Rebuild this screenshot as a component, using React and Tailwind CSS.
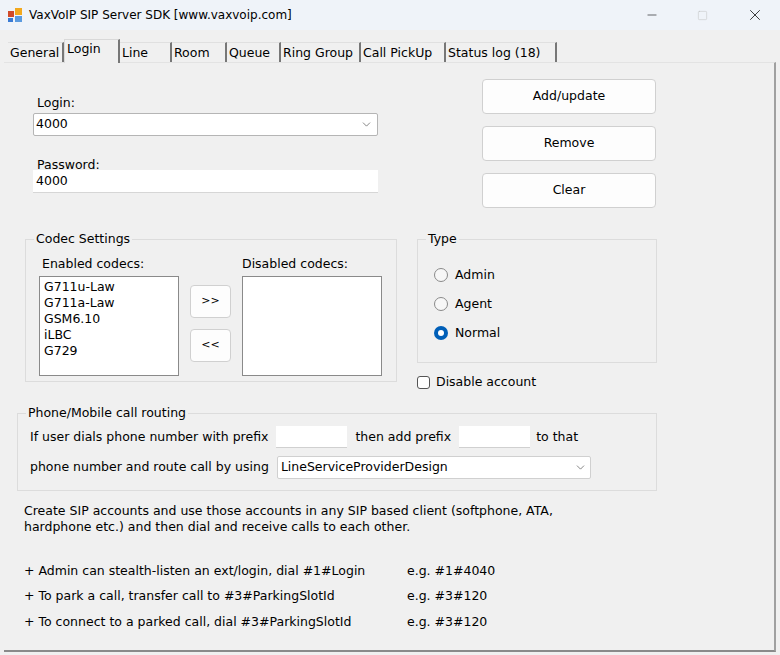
import { ChevronDown, Minus, Square, X } from "lucide-react";

const tabs = [
    { label: "General", w: 56 },
    { label: "Login", w: 56, active: true },
    { label: "Line", w: 52 },
    { label: "Room", w: 55 },
    { label: "Queue", w: 54 },
    { label: "Ring Group", w: 80 },
    { label: "Call PickUp", w: 85 },
    { label: "Status log (18)", w: 111 },
];

function Radio({ label, checked }) {
    return (
        <div className="flex items-center gap-[7px] h-[29px]">
            {checked ? (
                <span className="w-[14px] h-[14px] rounded-full bg-[#005fb8] flex items-center justify-center">
                    <span className="w-[6px] h-[6px] rounded-full bg-white" />
                </span>
            ) : (
                <span className="w-[14px] h-[14px] rounded-full border border-[#8a8a8a] bg-[#f7f7f7]" />
            )}
            <span>{label}</span>
        </div>
    );
}

function Button({ children, className }) {
    return (
        <div className={`bg-[#fdfdfd] border border-[#d0d0d0] rounded-[4px] flex items-center justify-center ${className}`}>
            {children}
        </div>
    );
}

export default function App() {
    return (
        <div className="w-[780px] h-[655px] bg-[#f0f0f0] text-[12.5px] text-black overflow-hidden" style={{ fontFamily: '"DejaVu Sans", Verdana, sans-serif' }}>
            {/* title bar */}
            <div className="h-[30px] bg-[#eff3f9] flex items-center text-[12px]">
                <svg width="16" height="16" viewBox="0 0 16 16" className="ml-[7px]">
                    <rect x="1" y="4" width="6" height="6" fill="#d04a2a" />
                    <rect x="8" y="1" width="7" height="7" fill="#f2a81e" />
                    <rect x="1" y="11" width="5" height="4" fill="#3a7bd5" />
                    <rect x="8" y="9" width="7" height="6" fill="#5b9be0" />
                </svg>
                <span className="ml-[6px]">VaxVoIP SIP Server SDK [www.vaxvoip.com]</span>
                <div className="ml-auto flex items-center">
                    <Minus size={14} strokeWidth={1} className="mr-[38px]" />
                    <Square size={11} strokeWidth={1} className="mr-[38px] text-[#bbb]" />
                    <X size={18} strokeWidth={1} className="mr-[16px]" />
                </div>
            </div>

            {/* tabs */}
            <div className="h-[32px] flex items-end pl-[8px] pt-[10px]">
                {tabs.map((t) => (
                    <div
                        key={t.label}
                        style={{ width: t.w }}
                        className={
                            t.active
                                ? "h-[24px] -mb-px bg-[#f0f0f0] border-x border-t border-[#d9d9d9] border-r-[#777] border-r-2 pl-[2px] z-10 leading-[18px]"
                                : "h-[20px] border-r-2 border-[#777] border-t border-t-[#e0e0e0] pl-[2px] leading-[20px]"
                        }
                    >
                        {t.label}
                    </div>
                ))}
            </div>

            {/* page */}
            <div className="mx-[4px] h-[590px] border-t border-[#e3e3e3] border-r-2 border-r-[#a0a0a0] border-b-2 border-b-[#8a8a8a] relative">
                <div className="flex">
                    {/* left column */}
                    <div className="w-[400px] pl-[17px]">
                        <div className="pl-[12px] pt-[31px]">
                            <div className="pl-[4px] h-[19px]">Login:</div>
                            <div className="w-[345px] h-[23px] bg-white border border-[#b5b5b5] rounded-[2px] flex items-center px-[2px]">
                                4000
                                <ChevronDown size={13} strokeWidth={1.3} className="ml-auto mr-[2px] text-[#555]" />
                            </div>
                            <div className="pl-[4px] h-[19px] mt-[20px]">Password:</div>
                            <div className="w-[345px] h-[23px] bg-white border-b border-[#d6d6d6] flex items-center px-[3px] mt-[-5px]">4000</div>
                        </div>
                        <fieldset className="mt-[37px] ml-[4px] w-[372px] h-[152px] border border-[#dcdcdc] px-[13px]">
                            <legend className="px-[2px] ml-[-5px]">Codec Settings</legend>
                            <div className="flex mt-[6px]">
                                <div>
                                    <div className="pl-[3px]">Enabled codecs:</div>
                                    <div className="w-[140px] h-[100px] mt-[2px] bg-white border border-[#8a8a8a] pl-[4px] pt-[2px] leading-[16px]">
                                        <div>G711u-Law</div>
                                        <div>G711a-Law</div>
                                        <div>GSM6.10</div>
                                        <div>iLBC</div>
                                        <div>G729</div>
                                    </div>
                                </div>
                                <div className="flex flex-col gap-[11px] mx-[11px] pt-[30px] text-[11px]">
                                    <Button className="w-[41px] h-[33px]">&gt;&gt;</Button>
                                    <Button className="w-[41px] h-[33px]">&lt;&lt;</Button>
                                </div>
                                <div>
                                    <div>Disabled codecs:</div>
                                    <div className="w-[140px] h-[100px] mt-[2px] bg-white border border-[#8a8a8a]" />
                                </div>
                            </div>
                        </fieldset>
                    </div>

                    {/* right column */}
                    <div className="pl-[13px]">
                        <div className="flex flex-col gap-[12px] pt-[16px] pl-[65px]">
                            <Button className="w-[174px] h-[35px]">Add/update</Button>
                            <Button className="w-[174px] h-[35px]">Remove</Button>
                            <Button className="w-[174px] h-[35px]">Clear</Button>
                        </div>
                        <fieldset className="mt-[22px] w-[240px] h-[133px] border border-[#dcdcdc] pl-[16px] pt-[12px]">
                            <legend className="px-[2px] ml-[-8px]">Type</legend>
                            <Radio label="Admin" />
                            <Radio label="Agent" />
                            <Radio label="Normal" checked />
                        </fieldset>
                        <div className="flex items-center gap-[6px] mt-[10px]">
                            <span className="w-[13px] h-[13px] border border-[#555] rounded-[3px] bg-white" />
                            Disable account
                        </div>
                    </div>
                </div>

                <fieldset className="ml-[13px] mt-[12px] w-[640px] h-[87px] border border-[#dcdcdc] pl-[12px]">
                    <legend className="px-[2px] ml-[-4px]">Phone/Mobile call routing</legend>
                    <div className="flex items-center h-[23px] mt-[3px]">
                        <span>If user dials phone number with prefix</span>
                        <span className="w-[71px] h-[22px] bg-white border-b border-[#d0d0d0] ml-[8px]" />
                        <span className="ml-[8px]">then add prefix</span>
                        <span className="w-[71px] h-[22px] bg-white border-b border-[#d0d0d0] ml-[8px]" />
                        <span className="ml-[6px]">to that</span>
                    </div>
                    <div className="flex items-center h-[23px] mt-[7px]">
                        <span>phone number and route call by using</span>
                        <div className="w-[314px] h-[23px] bg-white border border-[#d0d0d0] rounded-[2px] ml-[8px] flex items-center px-[3px]">
                            LineServiceProviderDesign
                            <ChevronDown size={13} strokeWidth={1.3} className="ml-auto text-[#555]" />
                        </div>
                    </div>
                </fieldset>

                <div className="pl-[20px] mt-[12px] leading-[16px]">
                    <div>Create SIP accounts and use those accounts in any SIP based client (softphone, ATA,</div>
                    <div>hardphone etc.) and then dial and receive calls to each other.</div>
                </div>
                <div className="pl-[20px] mt-[23px] leading-[25.5px]">
                    {[
                        ["+ Admin can stealth-listen an ext/login, dial #1#Login", "e.g. #1#4040"],
                        ["+ To park a call, transfer call to #3#ParkingSlotId", "e.g. #3#120"],
                        ["+ To connect to a parked call, dial #3#ParkingSlotId", "e.g. #3#120"],
                    ].map(([a, b]) => (
                        <div key={a} className="flex">
                            <span className="w-[383px]">{a}</span>
                            <span>{b}</span>
                        </div>
                    ))}
                </div>
            </div>
        </div>
    );
}
